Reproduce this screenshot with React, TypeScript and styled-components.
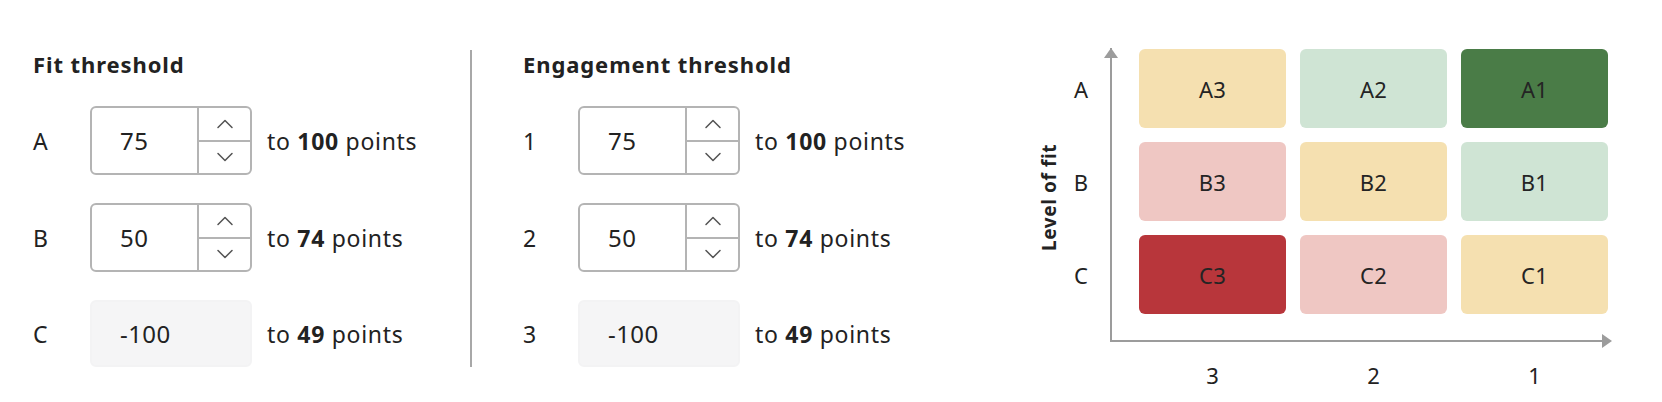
import React from "react";
import styled, { createGlobalStyle } from "styled-components";
import { ChevronUp, ChevronDown } from "lucide-react";

const GlobalStyle = createGlobalStyle`
    body {
        margin: 0;
        background: #ffffff;
        font-family: "Noto Sans", "Open Sans", sans-serif;
        color: #222222;
    }
`;

const Page = styled.div`
    display: flex;
    align-items: flex-start;
    padding: 50px 0 0 33px;
`;

const Panel = styled.section`
    width: 385px;
    display: flex;
    flex-direction: column;
`;

const Heading = styled.h2`
    margin: 0 0 28px;
    font-size: 22px;
    line-height: 28px;
    font-weight: 700;
    letter-spacing: 0.9px;
`;

const Rows = styled.div`
    display: flex;
    flex-direction: column;
    gap: 28px;
`;

const Row = styled.div`
    display: flex;
    align-items: center;
`;

const Label = styled.span<{ $width: number }>`
    width: ${(p) => p.$width}px;
    font-size: 23px;
`;

const Box = styled.div<{ $disabled?: boolean }>`
    width: 162px;
    height: ${(p) => (p.$disabled ? 67 : 69)}px;
    box-sizing: border-box;
    display: flex;
    border-radius: 6px;
    border: 2px solid ${(p) => (p.$disabled ? "#f3f3f4" : "#b4b4b4")};
    background: ${(p) => (p.$disabled ? "#f5f5f6" : "#ffffff")};
`;

const Value = styled.span`
    flex: 1;
    display: flex;
    align-items: center;
    padding-left: 28px;
    font-size: 24px;
    letter-spacing: 0.4px;
`;

const Stepper = styled.div`
    width: 51px;
    display: flex;
    flex-direction: column;
    border-left: 2px solid #b4b4b4;
`;

const StepButton = styled.div`
    flex: 1;
    display: flex;
    align-items: center;
    justify-content: center;
    color: #555555;
    & + & {
        border-top: 2px solid #b4b4b4;
    }
`;

const Range = styled.span`
    margin-left: 15px;
    font-size: 23px;
    letter-spacing: 0.7px;
    b {
        font-weight: 700;
    }
`;

const Divider = styled.div`
    width: 2px;
    height: 317px;
    background: #a8a8a8;
    margin: 0 51px 0 52px;
`;

const Chart = styled.div`
    margin: -2px 0 0 129px;
    display: flex;
    flex-direction: column;
`;

const ChartRow = styled.div`
    display: flex;
`;

const AxisTitle = styled.div`
    width: 24px;
    box-sizing: border-box;
    padding-bottom: 4px;
    display: flex;
    align-items: center;
    justify-content: center;
    writing-mode: vertical-rl;
    transform: rotate(180deg);
    font-size: 19px;
    font-weight: 700;
    letter-spacing: 0.6px;
    white-space: nowrap;
`;

const RowLabels = styled.div`
    width: 40px;
    margin-right: 9px;
    padding-top: 1px;
    display: grid;
    grid-auto-rows: 79px;
    row-gap: 14px;
    align-content: start;
`;

const AxisLabel = styled.span`
    display: flex;
    align-items: center;
    justify-content: center;
    font-size: 22px;
`;

const Plot = styled.div`
    position: relative;
    border-left: 2px solid #9c9c9c;
    border-bottom: 2px solid #9c9c9c;
    padding: 1px 2px 26px 27px;
`;

const ArrowUp = styled.span`
    position: absolute;
    left: -8px;
    top: 0;
    width: 0;
    height: 0;
    border-left: 7px solid transparent;
    border-right: 7px solid transparent;
    border-bottom: 10px solid #9c9c9c;
`;

const ArrowRight = styled.span`
    position: absolute;
    right: -2px;
    bottom: -8px;
    width: 0;
    height: 0;
    border-top: 7px solid transparent;
    border-bottom: 7px solid transparent;
    border-left: 10px solid #9c9c9c;
`;

const Grid = styled.div`
    display: grid;
    grid-template-columns: repeat(3, 147px);
    grid-auto-rows: 79px;
    column-gap: 14px;
    row-gap: 14px;
`;

const tones = {
    yellow: "#f5e0b0",
    mint: "#cfe4d4",
    green: "#4a7c47",
    pink: "#efc7c3",
    red: "#b8363b",
};

type Tone = keyof typeof tones;

const Cell = styled.div<{ $tone: Tone }>`
    border-radius: 6px;
    background: ${(p) => tones[p.$tone]};
    display: flex;
    align-items: center;
    justify-content: center;
    font-size: 22px;
    letter-spacing: 0.3px;
    color: #242424;
`;

const ColLabels = styled.div`
    margin: 21px 0 0 102px;
    display: grid;
    grid-template-columns: repeat(3, 147px);
    column-gap: 14px;
    font-size: 22px;
    line-height: 24px;
    text-align: center;
`;

type Threshold = { label: string; value: string; max: string; editable: boolean };

const fit: Threshold[] = [
    { label: "A", value: "75", max: "100", editable: true },
    { label: "B", value: "50", max: "74", editable: true },
    { label: "C", value: "-100", max: "49", editable: false },
];

const engagement: Threshold[] = [
    { label: "1", value: "75", max: "100", editable: true },
    { label: "2", value: "50", max: "74", editable: true },
    { label: "3", value: "-100", max: "49", editable: false },
];

const cells: { name: string; tone: Tone }[] = [
    { name: "A3", tone: "yellow" },
    { name: "A2", tone: "mint" },
    { name: "A1", tone: "green" },
    { name: "B3", tone: "pink" },
    { name: "B2", tone: "yellow" },
    { name: "B1", tone: "mint" },
    { name: "C3", tone: "red" },
    { name: "C2", tone: "pink" },
    { name: "C1", tone: "yellow" },
];

function ThresholdPanel({ title, items, labelWidth }: { title: string; items: Threshold[]; labelWidth: number }) {
    return (
        <Panel>
            <Heading>{title}</Heading>
            <Rows>
                {items.map((t) => (
                    <Row key={t.label}>
                        <Label $width={labelWidth}>{t.label}</Label>
                        <Box $disabled={!t.editable}>
                            <Value>{t.value}</Value>
                            {t.editable && (
                                <Stepper>
                                    <StepButton>
                                        <ChevronUp size={28} strokeWidth={1.3} />
                                    </StepButton>
                                    <StepButton>
                                        <ChevronDown size={28} strokeWidth={1.3} />
                                    </StepButton>
                                </Stepper>
                            )}
                        </Box>
                        <Range>
                            to <b>{t.max}</b> points
                        </Range>
                    </Row>
                ))}
            </Rows>
        </Panel>
    );
}

export default function App() {
    return (
        <>
            <GlobalStyle />
            <Page>
                <ThresholdPanel title="Fit threshold" items={fit} labelWidth={57} />
                <Divider />
                <ThresholdPanel title="Engagement threshold" items={engagement} labelWidth={55} />
                <Chart>
                    <ChartRow>
                        <AxisTitle>Level of fit</AxisTitle>
                        <RowLabels>
                            <AxisLabel>A</AxisLabel>
                            <AxisLabel>B</AxisLabel>
                            <AxisLabel>C</AxisLabel>
                        </RowLabels>
                        <Plot>
                            <ArrowUp />
                            <Grid>
                                {cells.map((c) => (
                                    <Cell key={c.name} $tone={c.tone}>
                                        {c.name}
                                    </Cell>
                                ))}
                            </Grid>
                            <ArrowRight />
                        </Plot>
                    </ChartRow>
                    <ColLabels>
                        <span>3</span>
                        <span>2</span>
                        <span>1</span>
                    </ColLabels>
                </Chart>
            </Page>
        </>
    );
}
